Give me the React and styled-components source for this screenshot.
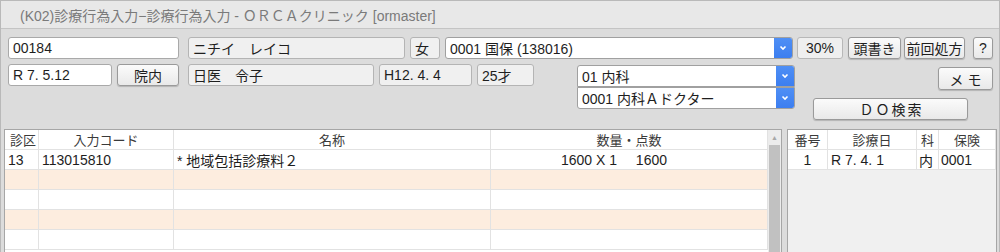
import React from "react";
import styled, { createGlobalStyle, css } from "styled-components";

const GlobalStyle = createGlobalStyle`
  * { box-sizing: border-box; }
  html, body { margin: 0; padding: 0; background: #dcdcdc; }
  body {
    font-family: "Liberation Sans", "Noto Sans CJK JP", sans-serif;
    font-size: 14px;
    color: #1e1e1e;
  }
`;

const Window = styled.div`
  width: 1000px;
  height: 252px;
  overflow: hidden;
  background: #dcdcdc;
  border: 1px solid #b9b9b9;
  border-bottom: none;
  display: flex;
  flex-direction: column;
`;

const TitleBar = styled.div`
  height: 28px;
  flex: none;
  background: #e8e8e8;
  border-bottom: 1px solid #c4c4c4;
  padding-left: 19px;
  display: flex;
  align-items: center;
  color: #7a7a7a;
  font-size: 14px;
`;

const Form = styled.div`
  padding: 8px 0 0 7px;
  flex: none;
`;

const Row = styled.div`
  display: flex;
  align-items: flex-start;
  margin-top: ${(p) => p.$mt || 0}px;
`;

const boxBase = css`
  height: ${(p) => p.$h || 22}px;
  width: ${(p) => p.$w}px;
  margin-left: ${(p) => p.$ml || 0}px;
  flex: none;
  border: 1px solid #a9a9a9;
  border-radius: 3px;
  display: flex;
  align-items: center;
  white-space: nowrap;
`;

const Field = styled.div`
  ${boxBase};
  padding-left: 4px;
  background: ${(p) => (p.$ro ? "#f0f0f0" : "#ffffff")};
  border-color: ${(p) => (p.$ro ? "#b4b4b4" : "#a9a9a9")};
`;

const Button = styled.div`
  ${boxBase};
  justify-content: center;
  margin-top: ${(p) => p.$mt || 0}px;
  align-self: ${(p) => p.$align || "auto"};
  background: ${(p) =>
    p.$flat ? "#efefef" : "linear-gradient(#fbfbfb, #e9e9e9)"};
  border-color: ${(p) => (p.$flat ? "#b8b8b8" : "#9a9a9a")};
  box-shadow: ${(p) => (p.$flat ? "none" : "0 1px 1px rgba(0,0,0,0.18)")};
  letter-spacing: ${(p) => p.$ls || 0}px;
  padding-left: ${(p) => p.$ls || 0}px;
`;

const Select = styled.div`
  ${boxBase};
  overflow: hidden;
  background: #fff;
  border-radius: ${(p) => p.$r || "3px"};
  border-color: #a0a0a0;
`;

const SelectText = styled.div`
  flex: 1;
  padding-left: 4px;
`;

const SelectBtn = styled.div`
  width: 18px;
  height: 100%;
  background: linear-gradient(#4f8ff5, #3c7ef0);
  display: flex;
  align-items: center;
  justify-content: center;
`;

const Stack = styled.div`
  display: flex;
  flex-direction: column;
  margin-left: ${(p) => p.$ml}px;
  margin-top: 1px;
`;

const RightCol = styled.div`
  display: flex;
  flex-direction: column;
  width: 180px;
  margin-left: 18px;
`;

const Body = styled.div`
  display: flex;
  margin-top: 9px;
  padding-left: 3px;
  flex: 1;
  min-height: 0;
`;

const Panel = styled.div`
  width: ${(p) => p.$w}px;
  margin-left: ${(p) => p.$ml || 0}px;
  border: 1px solid #a6a6a6;
  border-bottom: none;
  background: ${(p) => p.$bg};
  display: flex;
  overflow: hidden;
`;

const Grid = styled.div`
  flex: 1;
  display: grid;
  grid-template-columns: ${(p) => p.$cols};
  grid-auto-rows: 20px;
  align-content: start;
  background: ${(p) => p.$bg || "#fff"};
`;

const Head = styled.div`
  height: 20px;
  display: flex;
  align-items: center;
  justify-content: ${(p) => (p.$left ? "flex-start" : "center")};
  padding-left: ${(p) => (p.$left ? 5 : 0)}px;
  font-size: 13px;
  color: #3a3a3a;
  background: #fff;
  border-right: 1px solid #e2e2e2;
  border-bottom: 1px solid #e2e2e2;
`;

const Cell = styled.div`
  display: flex;
  align-items: center;
  justify-content: ${(p) => (p.$center ? "center" : "flex-start")};
  padding-left: ${(p) => (p.$pl === undefined ? 3 : p.$pl)}px;
  background: ${(p) => (p.$alt ? "#fdeddf" : "#fff")};
  border-right: 1px solid #e2e2e2;
  border-bottom: 1px solid #e2e2e2;
  white-space: nowrap;
`;

const Num = styled.span`
  display: inline-block;
  width: ${(p) => p.$w}px;
  text-align: right;
`;

const ScrollBar = styled.div`
  width: 13px;
  flex: none;
  background: #ececec;
  display: flex;
  flex-direction: column;
`;

const ScrollArrow = styled.div`
  height: 15px;
  display: flex;
  align-items: center;
  justify-content: center;
  color: #a8a8a8;
  font-size: 7px;
`;

const ScrollThumb = styled.div`
  flex: 1;
  margin: 0 1px;
  background: #c1c1c1;
`;

const Chevron = () => (
  <svg width="8" height="6" viewBox="0 0 8 6">
    <path d="M1.5 1.5 L4 4 L6.5 1.5" stroke="#fff" strokeWidth="1.6" fill="none" />
  </svg>
);

const Dropdown = ({ w, ml, r, children }) => (
  <Select $w={w} $ml={ml} $r={r}>
    <SelectText>{children}</SelectText>
    <SelectBtn>
      <Chevron />
    </SelectBtn>
  </Select>
);

const rows = [
  { kubun: "13", code: "113015810", name: "* 地域包括診療料２", qty: "1600 X 1", pts: "1600" },
  {},
  {},
  {},
  {},
];

export default function App() {
  return (
    <>
      <GlobalStyle />
      <Window>
        <TitleBar>(K02)診療行為入力−診療行為入力 - ＯＲＣＡクリニック [ormaster]</TitleBar>
        <Form>
          <Row>
            <Field $w={171}>00184</Field>
            <Field $w={217} $ml={9} $ro>ニチイ　レイコ</Field>
            <Field $w={30} $ml={5} $ro>女</Field>
            <Dropdown w={348} ml={5}>0001 国保 (138016)</Dropdown>
            <Button $w={46} $ml={4} $flat>30%</Button>
            <Button $w={53} $ml={5}>頭書き</Button>
            <Button $w={61} $ml={3}>前回処方</Button>
            <Button $w={20} $ml={8}>?</Button>
          </Row>
          <Row $mt={5}>
            <Field $w={104}>R 7. 5.12</Field>
            <Button $w={62} $ml={5}>院内</Button>
            <Field $w={186} $ml={9} $ro>日医　令子</Field>
            <Field $w={93} $ml={5} $ro>H12. 4. 4</Field>
            <Field $w={57} $ml={5} $ro>25才</Field>
            <Stack $ml={43}>
              <Dropdown w={218} r="3px 3px 0 0">01 内科</Dropdown>
              <Dropdown w={218} r="0 0 3px 3px">0001 内科Ａドクター</Dropdown>
            </Stack>
            <RightCol>
              <Button $w={55} $h={23} $mt={3} $align="flex-end" $ls={4}>メモ</Button>
              <Button $w={155} $mt={8} $ls={2}>ＤＯ検索</Button>
            </RightCol>
          </Row>
        </Form>
        <Body>
          <Panel $w={778} $bg="#fff">
            <Grid $cols="34px 135px 317px 1fr">
              <Head $left>診区</Head>
              <Head>入力コード</Head>
              <Head>名称</Head>
              <Head>数量・点数</Head>
              {rows.map((r, i) => (
                <React.Fragment key={i}>
                  <Cell $alt={i % 2 === 1}>{r.kubun}</Cell>
                  <Cell $alt={i % 2 === 1}>{r.code}</Cell>
                  <Cell $alt={i % 2 === 1}>{r.name}</Cell>
                  <Cell $alt={i % 2 === 1} $pl={0}>
                    {r.qty && (
                      <>
                        <Num $w={126}>{r.qty}</Num>
                        <Num $w={50}>{r.pts}</Num>
                      </>
                    )}
                  </Cell>
                </React.Fragment>
              ))}
            </Grid>
            <ScrollBar>
              <ScrollArrow>▲</ScrollArrow>
              <ScrollThumb />
            </ScrollBar>
          </Panel>
          <Panel $w={210} $ml={5} $bg="#f0f0f0">
            <Grid $cols="40px 89px 22px 1fr" $bg="#f0f0f0">
              <Head>番号</Head>
              <Head>診療日</Head>
              <Head>科</Head>
              <Head>保険</Head>
              <Cell $center $pl={0}>1</Cell>
              <Cell>R 7. 4. 1</Cell>
              <Cell $pl={2}>内</Cell>
              <Cell $pl={2}>0001</Cell>
            </Grid>
          </Panel>
        </Body>
      </Window>
    </>
  );
}
